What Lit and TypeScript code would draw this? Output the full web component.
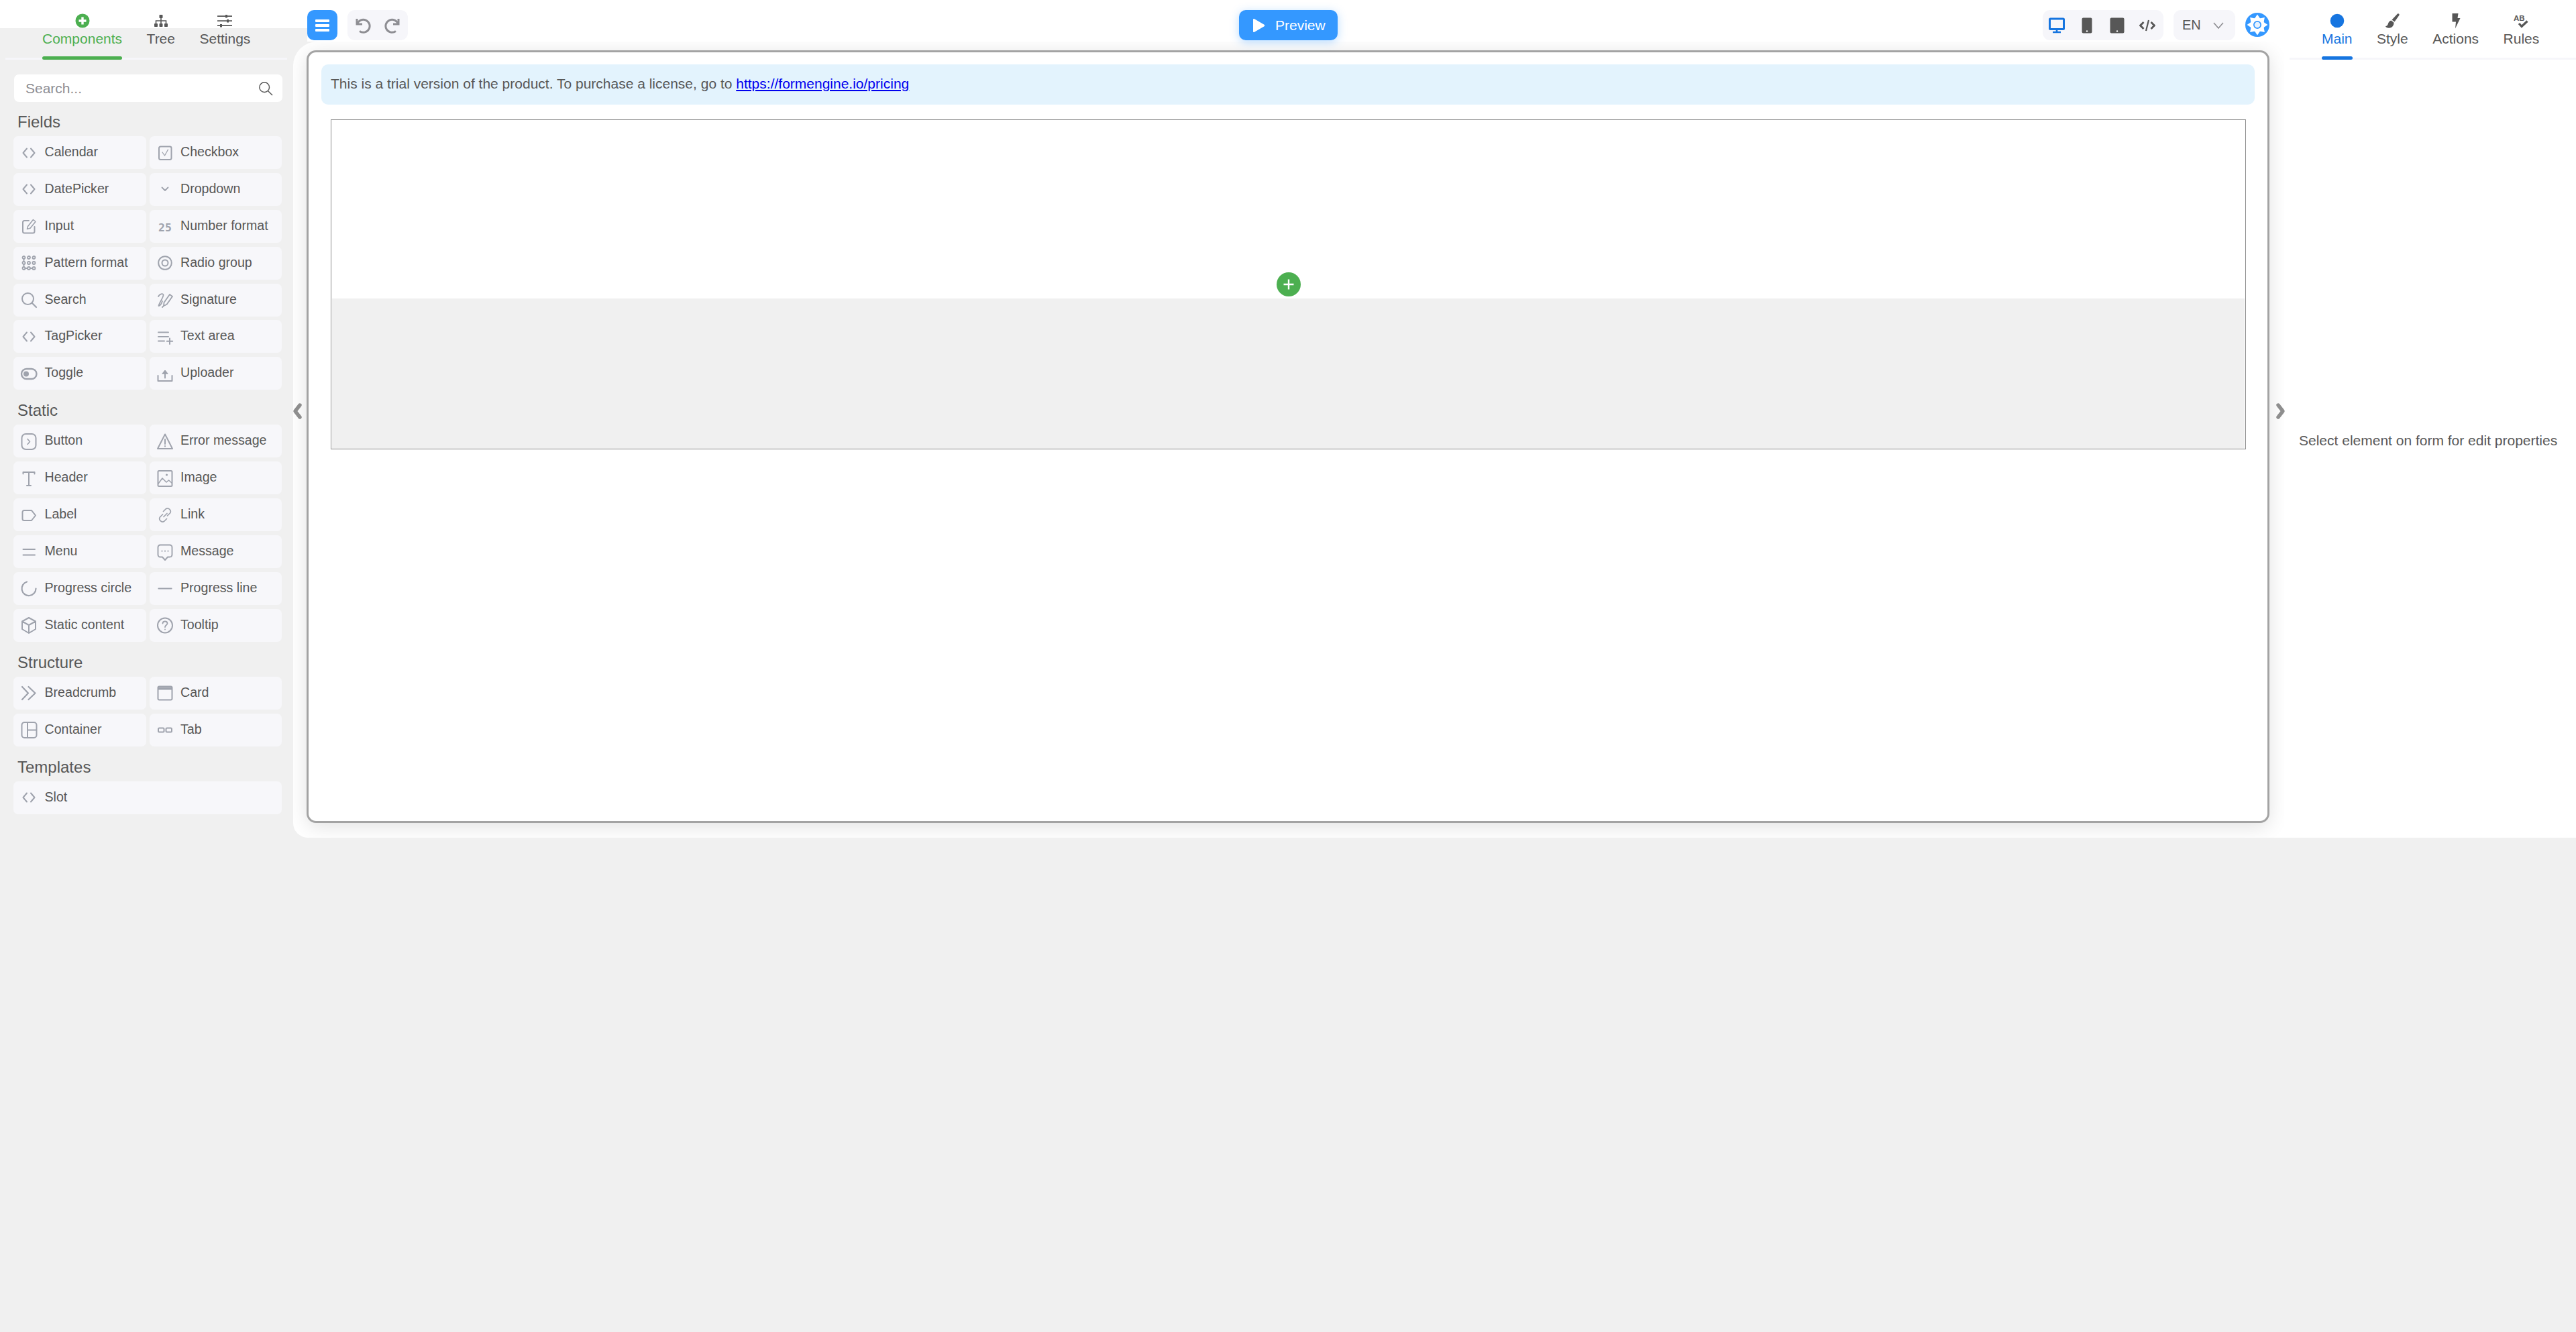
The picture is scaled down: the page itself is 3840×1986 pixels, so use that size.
import { LitElement, html, css, svg } from "lit";
import { customElement } from "lit/decorators.js";

const code = svg`<path d="M9 5.5 L3.5 12 L9 18.5 M15 5.5 L20.5 12 L15 18.5" stroke-width="2"/>`;
const icons: Record<string, unknown> = {
  code,
  checkbox: svg`<rect x="3" y="2.5" width="18.5" height="19.5" rx="2.5" stroke-width="2"/><path d="M8 11 l3.5 5 l5-9" stroke-width="1.3"/>`,
  down: svg`<path d="M7.5 9.5 L12 14 L16.5 9.5" stroke-width="1.8"/>`,
  input: svg`<path d="M12 4 H5.5 A2.5 2.5 0 0 0 3 6.5 V20 A2.5 2.5 0 0 0 5.5 22.5 H18 A2.5 2.5 0 0 0 20.5 20 V13" stroke-width="2"/><path d="M9.5 16.5 L10.5 12.5 L18.5 2.5 L22 5.5 L14 15.3 Z" stroke-width="1.6"/>`,
  num: svg`<text class="num" x="12" y="20" text-anchor="middle">25</text>`,
  pattern: svg`<g stroke-width="1.8"><circle cx="4.5" cy="4" r="2"/><circle cx="12" cy="4" r="2"/><circle cx="19.5" cy="4" r="2"/><circle cx="4.5" cy="12" r="2"/><circle cx="12" cy="12" r="2"/><circle cx="19.5" cy="12" r="2"/><circle cx="4.5" cy="20" r="2"/><circle cx="12" cy="20" r="2"/><circle cx="19.5" cy="20" r="2"/><path d="M4.5 6 V10 M4.5 14 V18 M6.5 20 H10 M14 20 H17.5"/></g>`,
  radio: svg`<circle cx="12" cy="12" r="9.8" stroke-width="2"/><circle cx="12" cy="12" r="4.5" stroke-width="2"/>`,
  search: svg`<circle cx="10.5" cy="10.5" r="8.5" stroke-width="2"/><path d="M16.5 16.5 L23 23" stroke-width="2.2"/>`,
  signature: svg`<path d="M2 7 C4 3 9 2 9.5 4.5 C10 8 3 17 2.5 21 C5 21 7 17 8 14" stroke-width="1.8"/><path d="M10 21 L10.5 16 L19 4 L23 7 L14.5 19 Z M8 23 L10 21" stroke-width="1.8"/>`,
  textarea: svg`<path d="M2 5.5 H17 M2 12 H17 M2 18.5 H11 M19 14.5 V23 M14.8 18.8 H23.2" stroke-width="2"/>`,
  toggle: svg`<rect x="1" y="5" width="22.5" height="15" rx="7.5" stroke-width="2.4"/><circle cx="8" cy="12.5" r="4" fill="currentColor" stroke="none"/>`,
  upload: svg`<path d="M1.5 15 V23 H22.5 V15" stroke-width="2"/><path d="M12 18.5 V9" stroke-width="2"/><path d="M8 12 L12 7 L16 12 Z" fill="currentColor" stroke-width="1"/>`,
  button: svg`<rect x="1.5" y="1" width="21" height="23" rx="6" stroke-width="2"/><path d="M10 8.5 L13.5 12.5 L10 16.5" stroke-width="1.6"/>`,
  error: svg`<path d="M12 1.5 L23 23 H1 Z" stroke-width="2"/><path d="M12 9 V16 M12 19 V19.6" stroke-width="2"/>`,
  header: svg`<path d="M3.5 5.5 V3 H20.5 V5.5 M12 3 V23 M9 23 H15" stroke-width="2"/>`,
  image: svg`<rect x="1.5" y="1" width="21" height="23" rx="1.5" stroke-width="2"/><path d="M2 20 L8 12 L14 18 L17.5 15 L22 19" stroke-width="1.6"/><circle cx="14.5" cy="7" r="1.6" fill="currentColor" stroke="none"/>`,
  label: svg`<path d="M5 5 H16 L22 12.5 L16 20 H5 A2.5 2.5 0 0 1 2.5 17.5 V7.5 A2.5 2.5 0 0 1 5 5 Z" stroke-width="2"/>`,
  link: svg`<path d="M10 14.5 L15 9.5 M8.5 11 L4.5 15 A4.5 4.5 0 0 0 11 21 L14.5 17.5 M15.5 13 L19.5 9 A4.5 4.5 0 0 0 13 3 L9.5 6.5" stroke-width="1.7"/>`,
  menu: svg`<path d="M3.5 8 H21 M3.5 16.5 H21" stroke-width="2"/>`,
  message: svg`<path d="M5 1.5 H19 A3.5 3.5 0 0 1 22.5 5 V16 A3.5 3.5 0 0 1 19 19.5 H16 L12 24 L8 19.5 H5 A3.5 3.5 0 0 1 1.5 16 V5 A3.5 3.5 0 0 1 5 1.5 Z" stroke-width="1.9"/><path d="M7.5 10.5 V10.7 M12 10.5 V10.7 M16.5 10.5 V10.7" stroke-width="2"/>`,
  circle: svg`<path d="M9 2.5 A10.5 10.5 0 1 0 22.5 12.5" stroke-width="2.2"/>`,
  line: svg`<path d="M2.5 12.5 H21.5" stroke-width="2.2"/>`,
  cube: svg`<path d="M12 1 L22 6.5 V18 L12 24 L2 18 V6.5 Z M2 6.5 L12 12 L22 6.5 M12 12 V24" stroke-width="2"/>`,
  tooltip: svg`<circle cx="12" cy="12.5" r="11" stroke-width="2"/><path d="M8.5 9.5 C8.5 5.5 15.5 5.5 15.5 9.5 C15.5 12 12 12 12 15 M12 18.4 V18.6" stroke-width="1.8"/>`,
  crumb: svg`<path d="M2 3 L11 12.5 L2 22 M11.5 3 L21.5 12.5 L11.5 22" stroke-width="2.2"/>`,
  card: svg`<rect x="1.5" y="2.5" width="21" height="20" rx="2" stroke-width="2"/><path d="M2 4 H22 V7 H2 Z" fill="currentColor" stroke-width="1"/>`,
  container: svg`<rect x="1.5" y="1" width="22" height="23" rx="4" stroke-width="2"/><path d="M10 1 V24 M10 12.5 H23" stroke-width="2"/>`,
  tab: svg`<rect x="2" y="9.5" width="8.5" height="6" rx="1.5" stroke-width="2"/><rect x="13.5" y="9.5" width="8.5" height="6" rx="1.5" stroke-width="2"/>`,
};

const sections: { title: string; items: [string, string][] }[] = [
  { title: "Fields", items: [
    ["Calendar", "code"], ["Checkbox", "checkbox"], ["DatePicker", "code"], ["Dropdown", "down"],
    ["Input", "input"], ["Number format", "num"], ["Pattern format", "pattern"], ["Radio group", "radio"],
    ["Search", "search"], ["Signature", "signature"], ["TagPicker", "code"], ["Text area", "textarea"],
    ["Toggle", "toggle"], ["Uploader", "upload"],
  ] },
  { title: "Static", items: [
    ["Button", "button"], ["Error message", "error"], ["Header", "header"], ["Image", "image"],
    ["Label", "label"], ["Link", "link"], ["Menu", "menu"], ["Message", "message"],
    ["Progress circle", "circle"], ["Progress line", "line"], ["Static content", "cube"], ["Tooltip", "tooltip"],
  ] },
  { title: "Structure", items: [
    ["Breadcrumb", "crumb"], ["Card", "card"], ["Container", "container"], ["Tab", "tab"],
  ] },
  { title: "Templates", items: [["Slot", "code"]] },
];

@customElement("app-root")
export class AppRoot extends LitElement {
  static styles = css`
    :host { display: block; height: 1986px; background: #f0f0f0; font-family: "Liberation Sans", Arial, sans-serif; color: #575757; }
    * { box-sizing: border-box; }
    svg { display: block; }
    .row { display: flex; height: 1249px; }

    .aside { width: 437px; flex: none; background: linear-gradient(#fff 42px, #f0f0f0 42px); }
    .tabs { display: flex; gap: 36.5px; height: 89px; border-bottom: 3px solid #f6f6fa; font-size: 21px; }
    .tabs.left { margin: 0 9px 0 8px; padding-left: 55px; }
    .tabs.right { margin-left: 8px; padding-left: 48px; }
    .tab { height: 89px; flex: none; display: flex; flex-direction: column; align-items: center; padding-top: 20px; color: #575757; }
    .tab svg { width: 24px; height: 24px; margin-top: -1px; }
    .tab .t { line-height: 24px; margin-top: 3px; white-space: nowrap; }
    .tab .bar { margin-top: auto; width: 100%; height: 5px; border-radius: 3px; background: transparent; }
    .tab.green .t { color: #4caf50; }
    .tab.green .bar { background: #4caf50; }
    .tab.blue .t { color: #1675e0; }
    .tab.blue .bar { background: #1675e0; }

    .search { margin: 21px 15px 0 20px; height: 43px; background: #fff; border: 1px solid #f0f0f0; border-radius: 8px; display: flex; align-items: center; justify-content: space-between; padding: 0 14px 0 17px; font-size: 21px; color: #8e8e93; }
    .search svg { width: 22px; height: 22px; color: #575757; fill: none; stroke: currentColor; stroke-width: 1.6; }
    .sections { padding: 0 17px 0 20px; margin-top: -2px; }
    .h { height: 52px; padding: 14px 0 0 6px; font-size: 24px; line-height: 33px; }
    .grid { display: grid; grid-template-columns: 1fr 1fr; gap: 5.9px 5px; }
    .item { height: 49px; background: #f7f7fa; border-radius: 7px; display: flex; align-items: center; padding: 0 0 2px 11px; font-size: 19.6px; gap: 11.5px; white-space: nowrap; }
    .item.wide { grid-column: 1 / span 2; }
    .item svg { width: 24px; height: 24px; flex: none; color: #9fa3ad; fill: none; stroke: currentColor; stroke-linecap: round; stroke-linejoin: round; overflow: visible; margin-top: 2px; }
    .num { font: bold 16.5px "DejaVu Sans Mono", monospace; fill: currentColor; stroke: none; }

    .main { width: 2968px; flex: none; position: relative; display: flex; flex-direction: column; background: linear-gradient(#fff 42px, transparent 42px); }
    .toolbar { position: relative; z-index: 1; height: 62px; flex: none; margin-left: 21px; padding: 15px 22px 0 0; background: #fff; display: grid; grid-template-columns: 1fr auto 1fr; align-items: start; }
    .tl, .tr { display: flex; gap: 15px; height: 45px; }
    .tr { justify-content: flex-end; }
    .burger { width: 45px; height: 45px; border-radius: 10px; background: #3498ff; display: flex; flex-direction: column; align-items: center; justify-content: center; gap: 3px; }
    .burger i { display: block; width: 21px; height: 4px; background: #fff; border-radius: 1px; }
    .pill { background: #f6f6fa; border-radius: 11px; height: 45px; display: flex; align-items: center; }
    .undo { width: 90px; padding: 0 11px; justify-content: space-between; color: #8e8e93; }
    .undo svg { width: 24px; height: 24px; fill: none; stroke: currentColor; stroke-width: 3; }
    .preview { width: 147px; height: 45px; border-radius: 10px; background: #3498ff; color: #fff; font-size: 21px; display: flex; align-items: center; padding-left: 19px; gap: 15px; box-shadow: 0 3px 14px rgba(52,152,255,.35); }
    .preview svg { width: 20px; height: 22px; fill: #fff; }
    .devices { width: 180px; padding-left: 9px; gap: 21px; }
    .devices svg { width: 24px; height: 24px; }
    .lang { width: 92px; padding: 0 15px 0 13px; justify-content: space-between; font-size: 20px; }
    .lang svg { width: 20px; height: 20px; fill: none; stroke: #8e8e93; stroke-width: 1.6; }
    .gear { width: 36px; height: 36px; margin-top: 4px; }

    .canvas { flex: 1; background: #fff; border-radius: 36px 0 0 22px; overflow: hidden; padding: 13px 22px 22px 20px; display: flex; }
    .box { flex: 1; border: 3px solid #a3a3a3; border-radius: 14px; box-shadow: 0 5px 30px rgba(0,0,0,.12); background: #fff; padding: 18px 19px 0 19px; }
    .banner { height: 60px; background: #e3f3fd; border-radius: 10px; display: flex; align-items: center; padding: 0 0 2px 14px; font-size: 21px; white-space: pre; }
    .banner a { color: #0000ee; text-decoration: underline; }
    .form { margin: 22px 13px 0 14px; height: 492px; border: 1px solid #8a8a8a; padding: 0 1px; display: flex; flex-direction: column; }
    .top { height: 266px; display: flex; justify-content: center; align-items: flex-end; padding-bottom: 3px; }
    .plus { width: 36px; height: 36px; }
    .bottom { flex: 1; background: #f0f0f0; }
    .chev { position: absolute; z-index: 2; top: 600px; width: 16px; height: 26px; fill: none; stroke: #8e8e8e; stroke-width: 5.4; stroke-linecap: round; stroke-linejoin: round; }
    .chev.l { left: -2px; }
    .chev.r { right: -3px; }

    .right { flex: 1; background: #fff; min-width: 0; }
    .hint { padding: 556px 0 0 22px; font-size: 21px; line-height: 24px; white-space: nowrap; }
  `;

  private tab(label: string, icon: unknown, cls = "") {
    return html`<div class="tab ${cls}">${icon}<span class="t">${label}</span><span class="bar"></span></div>`;
  }

  render() {
    const plusIcon = svg`<svg viewBox="0 0 24 24"><circle cx="12" cy="12" r="10.5" fill="#4caf50"/><path d="M12 6.5 V17.5 M6.5 12 H17.5" stroke="#fff" stroke-width="3.4"/></svg>`;
    const tree = svg`<svg viewBox="0 0 24 24" fill="#575757"><rect x="9.5" y="3" width="5" height="5" rx=".8"/><rect x="2" y="16" width="5" height="5" rx=".8"/><rect x="9.5" y="16" width="5" height="5" rx=".8"/><rect x="17" y="16" width="5" height="5" rx=".8"/><path d="M12 8 V16 M4.5 16 V12 H19.5 V16" fill="none" stroke="#575757" stroke-width="1.6"/></svg>`;
    const sliders = svg`<svg viewBox="0 0 24 24" fill="#575757"><path d="M1 5.2 H23 M1 12.2 H23 M1 19.2 H23" stroke="#575757" stroke-width="1.8"/><rect x="13" y="3" width="3" height="4.5"/><rect x="15" y="10" width="3" height="4.5"/><rect x="5" y="17" width="3" height="4.5"/></svg>`;
    const dot = svg`<svg viewBox="0 0 24 24"><circle cx="12" cy="12" r="10.3" fill="#1675e0"/></svg>`;
    const brush = svg`<svg viewBox="0 0 24 24" fill="#575757"><path d="M20 1.5 C22 .8 23.2 2.5 22.3 4 L15.5 13.5 L11.5 10.5 Z"/><path d="M10.5 11.5 L14.5 14.8 C14.5 19 12 23 7 22.8 C4.5 22.6 2.5 21.5 2 20 C5 20.2 5.5 17.8 6.2 15.6 C7 13.2 8.8 12 10.5 11.5 Z"/></svg>`;
    const bolt = svg`<svg viewBox="0 0 24 24" fill="#575757"><path d="M6.5 1 H15.5 L14.5 8 H18.5 L11 23.5 L12 13.5 H6.5 Z"/></svg>`;
    const rules = svg`<svg viewBox="0 0 24 24"><text x="1" y="12" font-size="11.5" font-weight="700" font-family="Liberation Sans" fill="#575757">AB</text><path d="M9 16 L13 20.5 L21.5 12.5" fill="none" stroke="#575757" stroke-width="3.2"/></svg>`;
    const teeth = [0, 45, 90, 135, 180, 225, 270, 315];

    return html`
      <div class="row">
        <aside class="aside">
          <div class="tabs left">
            ${this.tab("Components", plusIcon, "green")}
            ${this.tab("Tree", tree)}
            ${this.tab("Settings", sliders)}
          </div>
          <div class="search"><span>Search...</span><svg viewBox="0 0 24 24"><circle cx="10" cy="10" r="8"/><path d="M16 16 L23 23"/></svg></div>
          <div class="sections">
            ${sections.map(s => html`
              <div class="h">${s.title}</div>
              <div class="grid">
                ${s.items.map(([name, ic]) => html`
                  <div class="item ${s.items.length === 1 ? "wide" : ""}"><svg viewBox="0 0 24 24">${icons[ic]}</svg><span>${name}</span></div>`)}
              </div>`)}
          </div>
        </aside>

        <main class="main">
          <svg class="chev l" viewBox="0 0 16 26"><path d="M12 4 L5 13 L12 22"/></svg>
          <svg class="chev r" viewBox="0 0 16 26"><path d="M4 4 L11 13 L4 22"/></svg>
          <div class="toolbar">
            <div class="tl">
              <div class="burger"><i></i><i></i><i></i></div>
              <div class="pill undo">
                <svg viewBox="0 0 24 24"><path d="M3 2 V10 H11"/><path d="M3.5 10 A9.5 9.5 0 1 1 7 20.5"/></svg>
                <svg viewBox="0 0 24 24"><path d="M21 2 V10 H13"/><path d="M20.5 10 A9.5 9.5 0 1 0 17 20.5"/></svg>
              </div>
            </div>
            <div class="preview"><svg viewBox="0 0 20 22"><path d="M2 2.2 C2 1 3 .6 4 1.2 L18.5 9.8 C19.5 10.4 19.5 11.6 18.5 12.2 L4 20.8 C3 21.4 2 21 2 19.8 Z"/></svg><span>Preview</span></div>
            <div class="tr">
              <div class="pill devices">
                <svg viewBox="0 0 24 24"><rect x="1.5" y="2" width="21" height="15.5" rx="1" fill="none" stroke="#1675e0" stroke-width="3"/><path d="M12 18 V21 M6 22 H18" stroke="#1675e0" stroke-width="2.6"/></svg>
                <svg viewBox="0 0 24 24"><rect x="4.5" y=".5" width="15" height="23" rx="2" fill="#575757"/><circle cx="12" cy="20.5" r="1.2" fill="#fff"/></svg>
                <svg viewBox="0 0 24 24"><rect x="1.5" y=".5" width="21" height="23" rx="2" fill="#575757"/><circle cx="12" cy="20.5" r="1.2" fill="#fff"/></svg>
                <svg viewBox="0 0 24 24" fill="none" stroke="#575757" stroke-width="2.8"><path d="M6.5 7 L1.5 12 L6.5 17 M17.5 7 L22.5 12 L17.5 17"/><path d="M14 4 L10 20" stroke-width="2.2"/></svg>
              </div>
              <div class="pill lang"><span>EN</span><svg viewBox="0 0 20 20"><path d="M3 6 L10 14 L17 6"/></svg></div>
              <svg class="gear" viewBox="0 0 36 36"><circle cx="18" cy="18" r="18" fill="#3498ff"/><circle cx="18" cy="18" r="10.5" fill="#fff"/>${teeth.map(a => svg`<path d="M13 10 L18 2.6 L23 10 Z" fill="#fff" transform="rotate(${a} 18 18)"/>`)}<circle cx="18" cy="18" r="6" fill="#3498ff"/><circle cx="18" cy="18" r="4.3" fill="#e6f2ff"/></svg>
            </div>
          </div>
          <div class="canvas">
            <div class="box">
              <div class="banner"><span>This is a trial version of the product. To purchase a license, go to <a href="#">https://formengine.io/pricing</a></span></div>
              <div class="form">
                <div class="top"><svg class="plus" viewBox="0 0 36 36"><circle cx="18" cy="18" r="18" fill="#4caf50"/><path d="M10.5 18 H25.5 M18 10.5 V25.5" stroke="#fff" stroke-width="2.4"/></svg></div>
                <div class="bottom"></div>
              </div>
            </div>
          </div>
        </main>

        <section class="right">
          <div class="tabs right">
            ${this.tab("Main", dot, "blue")}
            ${this.tab("Style", brush)}
            ${this.tab("Actions", bolt)}
            ${this.tab("Rules", rules)}
          </div>
          <div class="hint">Select element on form for edit properties</div>
        </section>
      </div>
    `;
  }
}
